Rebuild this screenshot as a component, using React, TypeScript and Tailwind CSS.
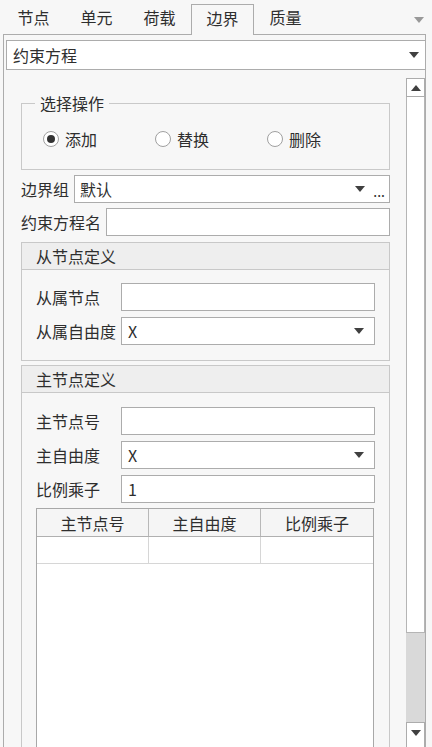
import React from "react";

const Arrow = ({ color = "#404040" }: { color?: string }) => (
  <svg width="10" height="6" viewBox="0 0 10 6">
    <path d="M0 0H10L5 6Z" fill={color} />
  </svg>
);

const Radio = ({ checked, label }: { checked?: boolean; label: string }) => (
  <div className="flex w-[112px] items-center gap-[6px]">
    <div className="flex h-[16px] w-[16px] items-center justify-center rounded-full border border-[#a0a0a0] bg-white">
      {checked && <div className="h-[8px] w-[8px] rounded-full bg-[#333333]" />}
    </div>
    <span>{label}</span>
  </div>
);

const TextBox = ({ value = "", arrow = false }: { value?: string; arrow?: boolean }) => (
  <div className="flex h-[28px] flex-1 items-center border border-[#acacac] bg-white pl-[6px] pr-[10px]">
    <span className="flex-1">{value}</span>
    {arrow && <Arrow />}
  </div>
);

const FieldRow = ({ label, value, arrow }: { label: string; value?: string; arrow?: boolean }) => (
  <div className="flex items-center">
    <span className="w-[85px] shrink-0">{label}</span>
    <TextBox value={value} arrow={arrow} />
  </div>
);

const GroupHeader = ({ title }: { title: string }) => (
  <div className="flex h-[27px] items-center border-b border-[#c8c8c8] bg-[#eeeeee] pl-[14px]">
    {title}
  </div>
);

export default function App() {
  const tabs = ["节点", "单元", "荷载", "边界", "质量"];
  return (
    <div
      className="flex h-[747px] w-[432px] flex-col overflow-hidden bg-[#f7f7f7] text-[16px] leading-[22px] text-[#2e2e2e]"
      style={{ fontFamily: '"Microsoft YaHei", "Noto Sans CJK SC", "Noto Sans", sans-serif' }}
    >
      {/* tabs */}
      <div className="relative z-10 flex h-[34px] shrink-0 items-end pl-[2px]">
        {tabs.map((t) =>
          t === "边界" ? (
            <div
              key={t}
              className="-mb-px flex h-[31px] w-[63px] items-center justify-center border border-b-0 border-[#acacac] bg-[#f7f7f7] pb-[4px]"
            >
              {t}
            </div>
          ) : (
            <div key={t} className="flex h-[30px] w-[63px] items-center justify-center pb-[5px]">
              {t}
            </div>
          )
        )}
        <div className="ml-auto mb-[11px] mr-[8px]">
          <Arrow color="#999999" />
        </div>
      </div>

      {/* panel */}
      <div className="ml-[3px] flex min-h-0 w-[423px] flex-1 flex-col border border-b-0 border-[#acacac]">
        <div className="ml-[2px] mt-[5px] flex h-[30px] w-[420px] shrink-0 items-center border border-[#acacac] bg-white pl-[6px] pr-[6px]">
          <span className="flex-1">约束方程</span>
          <Arrow />
        </div>

        <div className="mt-[8px] flex min-h-0 flex-1 overflow-hidden">
          {/* content */}
          <div className="flex w-[402px] flex-col pl-[17px]">
            <fieldset className="mt-[14px] h-[78px] w-[369px] shrink-0 border border-[#c9c9c9]">
              <legend className="ml-[13px] px-[5px] leading-[22px]">选择操作</legend>
              <div className="mt-[14px] flex pl-[21px]">
                <Radio checked label="添加" />
                <Radio label="替换" />
                <Radio label="删除" />
              </div>
            </fieldset>

            <div className="mt-[5px] flex w-[369px] items-center">
              <span className="w-[53px] shrink-0">边界组</span>
              <div className="flex h-[28px] flex-1 items-center border border-[#acacac] bg-white pl-[5px] pr-[4px]">
                <span className="flex-1">默认</span>
                <Arrow />
                <span className="ml-[8px] mt-[4px] text-[14px] leading-[14px]">...</span>
              </div>
            </div>

            <div className="mt-[5px] flex w-[369px] items-center">
              <span className="w-[85px] shrink-0">约束方程名</span>
              <TextBox />
            </div>

            <div className="mt-[6px] w-[369px] shrink-0 border border-[#c8c8c8]">
              <GroupHeader title="从节点定义" />
              <div className="flex flex-col gap-[6px] pl-[14px] pr-[14px] pt-[13px] pb-[15px]">
                <FieldRow label="从属节点" />
                <FieldRow label="从属自由度" value="X" arrow />
              </div>
            </div>

            <div className="mt-[4px] flex w-[369px] flex-1 flex-col border border-b-0 border-[#c8c8c8]">
              <GroupHeader title="主节点定义" />
              <div className="flex flex-1 flex-col pl-[14px] pr-[14px] pt-[14px]">
                <div className="flex flex-col gap-[6px]">
                  <FieldRow label="主节点号" />
                  <FieldRow label="主自由度" value="X" arrow />
                  <FieldRow label="比例乘子" value="1" />
                </div>
                <div className="mt-[5px] flex w-[338px] flex-1 flex-col border border-b-0 border-[#a8a8a8] bg-white">
                  <div className="grid h-[28px] grid-cols-3 border-b border-[#b0b0b0] bg-[#f5f5f5]">
                    <div className="flex items-center justify-center border-r border-[#b8b8b8]">主节点号</div>
                    <div className="flex items-center justify-center border-r border-[#b8b8b8]">主自由度</div>
                    <div className="flex items-center justify-center">比例乘子</div>
                  </div>
                  <div className="grid h-[27px] grid-cols-3 border-b border-[#d6d6d6]">
                    <div className="border-r border-[#d6d6d6]" />
                    <div className="border-r border-[#d6d6d6]" />
                    <div />
                  </div>
                </div>
              </div>
            </div>
          </div>

          {/* scrollbar */}
          <div className="flex w-[19px] flex-col">
            <div className="flex h-[19px] shrink-0 items-center justify-center border border-[#acacac] bg-white">
              <svg width="10" height="6" viewBox="0 0 10 6">
                <path d="M0 6H10L5 0Z" fill="#404040" />
              </svg>
            </div>
            <div className="h-[536px] shrink-0 border border-t-0 border-[#b5b5b5] bg-white" />
            <div className="h-[89px] shrink-0 bg-[#d9d9d9]" />
            <div className="flex h-[26px] shrink-0 items-start justify-center border border-[#acacac] bg-white pt-[7px]">
              <Arrow />
            </div>
          </div>
        </div>
      </div>
    </div>
  );
}
